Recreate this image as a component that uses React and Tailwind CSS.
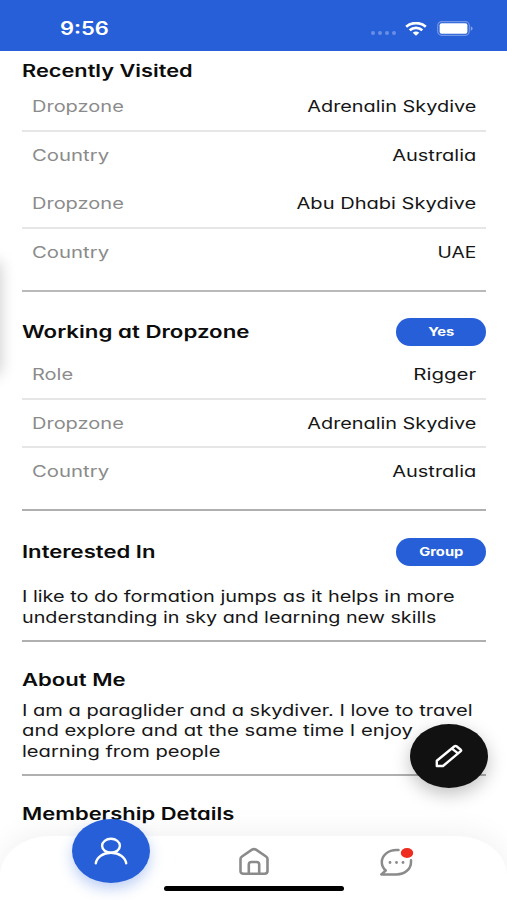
import clsx from "clsx";

const Label = ({ children, className }) => (
  <span className={clsx("block whitespace-nowrap", className)}>{children}</span>
);

const Row = ({ label, value, valueScale, labelScale = "scale-x-[1.25]", className }) => (
  <div className={clsx("flex items-center justify-between px-[10px]", className)}>
    <Label className={clsx("origin-left text-[#8b8b8b]", labelScale)}>{label}</Label>
    <Label className={clsx("origin-right text-[#161616]", valueScale)}>{value}</Label>
  </div>
);

const Heading = ({ children, scale }) => (
  <h2 className={clsx("origin-left whitespace-nowrap text-[17px] leading-6 font-semibold text-[#0c0c0c]", scale)}>
    {children}
  </h2>
);

const Pill = ({ children }) => (
  <div className="flex h-[28px] w-[90px] items-center justify-center rounded-full bg-[#275fd9] text-[11.5px] font-bold text-white">
    <span className="scale-x-[1.28]">{children}</span>
  </div>
);

const StatusBar = () => (
  <header className="flex h-[51px] items-center justify-between bg-[#275fd9] pt-[6px] pr-[34px] pl-[60px] text-white">
    <span className="origin-left scale-x-[1.22] text-[18px] font-semibold">9:56</span>
    <div className="flex items-center">
      <div className="mt-[9px] mr-[9px] flex gap-[3px]">
        {[0, 1, 2, 3].map((i) => (
          <i key={i} className="h-[4px] w-[4px] rounded-full bg-white/30" />
        ))}
      </div>
      <svg className="mr-[10px] h-[14px] w-[22px]" viewBox="0 0 22 14" fill="none" stroke="white" strokeWidth="2.8">
        <path d="M1.200 4.700C6.600 0 15.400 0 20.800 4.700" />
        <path d="M4.700 8.200C8.400 5 13.600 5 17.300 8.200" />
        <path d="M7.700 10.700C9.600 9.100 12.400 9.100 14.300 10.700L11 13.700Z" fill="white" stroke="none" />
      </svg>
      <svg className="h-[15px] w-[36px]" viewBox="0 0 36 15">
        <rect x="0.700" y="0.700" width="31.600" height="13.600" rx="4" fill="none" stroke="white" strokeOpacity="0.35" strokeWidth="1.200" />
        <rect x="2.600" y="2.300" width="27.800" height="10.400" rx="2" fill="white" />
        <path d="M33.800 5.200Q35.600 6 35.600 7.500T33.800 9.800Z" fill="white" fillOpacity="0.45" />
      </svg>
    </div>
  </header>
);

const UserIcon = () => (
  <svg className="h-[28px] w-[34px]" viewBox="0 0 34 28" fill="none" stroke="white" strokeWidth="2.400" strokeLinecap="round">
    <ellipse cx="17" cy="8.800" rx="8.900" ry="7" />
    <path d="M1.800 26.300C2.800 20 9 15.800 17 15.800S31.200 20 32.200 26.300" />
  </svg>
);

const HomeIcon = () => (
  <svg className="h-[28px] w-[32px]" viewBox="0 0 32 28" fill="none" stroke="#8b8b8b" strokeWidth="2.600" strokeLinejoin="round">
    <path d="M2.500 12Q2.500 10.500 4 9.500L14 2.700Q16 1.500 18 2.700L28 9.500Q29.500 10.500 29.500 12V24Q29.500 26.700 26.500 26.700H5.500Q2.500 26.700 2.500 24Z" />
    <path d="M10.800 26V17.500Q10.800 15 13.500 15H18.500Q21.200 15 21.200 17.500V26" />
  </svg>
);

const ChatIcon = () => (
  <svg className="h-[30px] w-[35px]" viewBox="0 0 35 30">
    <path
      d="M19.500 3H17.500C9 3 2.800 8.500 2.800 15.200C2.800 18.500 4.200 21.300 6.800 23.500L2.300 27.400H17.500C26 27.400 32 21.800 32 15.200V13.200"
      fill="none" stroke="#8b8b8b" strokeWidth="2.500" strokeLinecap="round" strokeLinejoin="round"
    />
    <g fill="#8b8b8b">
      <circle cx="11" cy="15.500" r="1.400" />
      <circle cx="17.500" cy="15.500" r="1.400" />
      <circle cx="24" cy="15.500" r="1.400" />
    </g>
    <ellipse cx="28" cy="6" rx="6.200" ry="5" fill="#ee2d20" />
  </svg>
);

const EditButton = () => (
  <button className="absolute top-[724px] left-[410px] flex h-[64px] w-[78px] items-center justify-center rounded-[50%] bg-[#111] shadow-[0_6px_18px_rgba(0,0,0,0.25)]">
    <svg className="h-[24px] w-[28px]" viewBox="0 0 28 24" fill="none" stroke="white" strokeWidth="2.400" strokeLinejoin="round">
      <path d="M1.800 22V16.800L19.500 2.300Q20.500 1.500 21.500 2.300L25.800 5.800Q26.600 6.500 25.800 7.200L8 22Z" />
      <path d="M17 4.600L23 9.400" />
    </svg>
  </button>
);

const TabBar = () => (
  <nav className="absolute inset-x-0 bottom-0 h-[64px] rounded-t-[50px_40px] bg-white shadow-[0_-4px_30px_rgba(0,0,0,0.06)]">
    <button className="absolute top-[-17px] left-[72px] flex h-[64px] w-[78px] items-center justify-center rounded-[50%] bg-[#275fd9] shadow-[0_6px_14px_rgba(39,95,217,0.3)]">
      <UserIcon />
    </button>
    <div className="flex pt-[11px] pl-[238px]">
      <HomeIcon />
      <div className="ml-[109px]">
        <ChatIcon />
      </div>
    </div>
    <div className="absolute bottom-[9px] left-[164px] h-[5px] w-[180px] rounded-full bg-black" />
  </nav>
);

export default function App() {
  return (
    <div className="relative h-[900px] w-[507px] overflow-hidden bg-white font-['Inter',sans-serif] text-[16px] leading-5 [font-feature-settings:'cv11']">
      <StatusBar />
      <main className="pr-[21px] pl-[22px]">
        <section className="h-[241px] border-b-2 border-[#b9b9b9]">
          <div className="h-[31px] pt-[8px]">
            <Heading scale="scale-x-[1.28]">Recently Visited</Heading>
          </div>
          <Row className="h-[50px] border-b-2 border-[#e6e6e6]" label="Dropzone" value="Adrenalin Skydive" valueScale="scale-x-[1.24]" />
          <Row className="h-[46px]" label="Country" labelScale="scale-x-[1.27]" value="Australia" valueScale="scale-x-[1.25]" />
          <Row className="h-[51px] border-b-2 border-[#e6e6e6]" label="Dropzone" value="Abu Dhabi Skydive" valueScale="scale-x-[1.255]" />
          <Row className="h-[46px]" label="Country" labelScale="scale-x-[1.27]" value="UAE" valueScale="scale-x-[1.2]" />
        </section>

        <section className="h-[219px] border-b-2 border-[#b0b0b0]">
          <div className="flex h-[57px] items-center justify-between pt-[23px]">
            <Heading scale="scale-x-[1.31]">Working at Dropzone</Heading>
            <Pill>Yes</Pill>
          </div>
          <Row className="h-[51px] border-b-2 border-[#e6e6e6]" label="Role" value="Rigger" valueScale="scale-x-[1.28]" />
          <Row className="h-[48px] border-b-2 border-[#e6e6e6]" label="Dropzone" value="Adrenalin Skydive" valueScale="scale-x-[1.24]" />
          <Row className="h-[46px]" label="Country" labelScale="scale-x-[1.27]" value="Australia" valueScale="scale-x-[1.25]" />
        </section>

        <section className="h-[131px] border-b-2 border-[#b0b0b0]">
          <div className="flex h-[75px] items-center justify-between pt-[6px]">
            <Heading scale="scale-x-[1.3]">Interested In</Heading>
            <Pill>Group</Pill>
          </div>
          <div className="leading-[20.500px] text-[#161616]">
            <Label className="origin-left scale-x-[1.243]">I like to do formation jumps as it helps in more</Label>
            <Label className="origin-left scale-x-[1.233]">understanding in sky and learning new skills</Label>
          </div>
        </section>

        <section className="h-[134px] border-b-2 border-[#b0b0b0] pt-[26px]">
          <Heading scale="scale-x-[1.3]">About Me</Heading>
          <div className="pt-[8px] leading-[20.250px] text-[#161616]">
            <Label className="origin-left scale-x-[1.253]">I am a paraglider and a skydiver. I love to travel</Label>
            <Label className="origin-left scale-x-[1.267]">and explore and at the same time I enjoy</Label>
            <Label className="origin-left scale-x-[1.257]">learning from people</Label>
          </div>
        </section>

        <section className="pt-[26px]">
          <Heading scale="scale-x-[1.29]">Membership Details</Heading>
        </section>
      </main>

      {/* drawer edge peeking in from the left */}
      <div className="absolute top-[262px] left-[-20px] h-[112px] w-[20px] shadow-[0_0_16px_rgba(0,0,0,0.22)]" />
      <EditButton />
      <TabBar />
    </div>
  );
}
